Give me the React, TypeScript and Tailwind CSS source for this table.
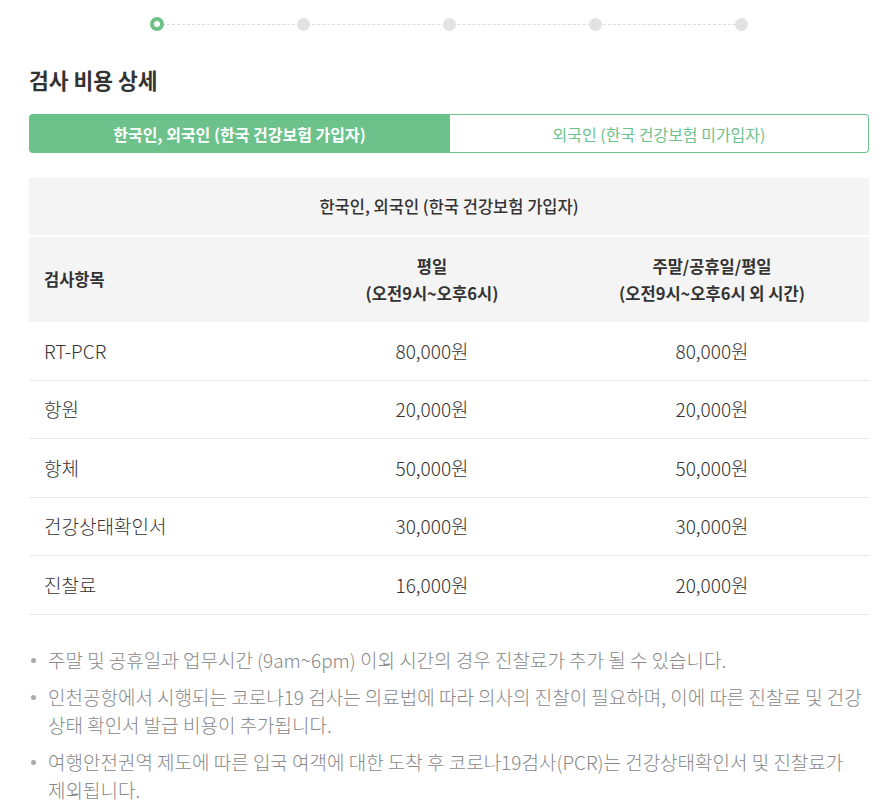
import React from "react";

const rows = [
  ["RT-PCR", "80,000원", "80,000원"],
  ["항원", "20,000원", "20,000원"],
  ["항체", "50,000원", "50,000원"],
  ["건강상태확인서", "30,000원", "30,000원"],
  ["진찰료", "16,000원", "20,000원"],
];

export default function App() {
  return (
    <div
      className="w-[881px] min-h-[811px] bg-white"
      style={{ fontFamily: '"Noto Sans CJK KR", "Noto Sans", sans-serif' }}
    >
      <div className="ml-[29px] w-[840px]">
        {/* stepper */}
        <div className="pt-[17px]">
          <div className="relative mx-auto flex h-[14px] w-[598px] items-center justify-between">
            <div className="absolute left-[7px] right-[7px] top-[7px] border-t border-dashed border-[#dcdcdc]" />
            <div className="relative h-[14px] w-[14px] rounded-full border-[4.5px] border-[#6cc28a] bg-white" />
            <div className="relative h-[13px] w-[13px] rounded-full bg-[#e2e2e2]" />
            <div className="relative h-[13px] w-[13px] rounded-full bg-[#e2e2e2]" />
            <div className="relative h-[13px] w-[13px] rounded-full bg-[#e2e2e2]" />
            <div className="relative h-[13px] w-[13px] rounded-full bg-[#e2e2e2]" />
          </div>
        </div>

        <h2 className="mt-[35px] text-[21.5px] font-bold leading-[28px] text-[#333]">
          검사 비용 상세
        </h2>

        {/* tabs */}
        <div className="mt-[20px] grid h-[39px] grid-cols-[421px_1fr]">
          <div className="flex items-center justify-center rounded-l-[4px] bg-[#6cc28a] text-[16px] font-bold text-white">
            한국인, 외국인 (한국 건강보험 가입자)
          </div>
          <div className="flex items-center justify-center rounded-r-[4px] border border-l-0 border-[#6cc28a] text-[16px] text-[#6cc28a]">
            외국인 (한국 건강보험 미가입자)
          </div>
        </div>

        {/* table */}
        <div className="mt-[25px]">
          <div className="flex h-[57px] items-center justify-center bg-[#f4f4f4] text-[16.5px] font-medium text-[#333]">
            한국인, 외국인 (한국 건강보험 가입자)
          </div>
          <div className="mt-[2px] grid h-[85px] grid-cols-[280px_246px_1fr] items-center bg-[#f4f4f4] text-[16.5px] font-bold leading-[27px] text-[#333]">
            <div className="pl-[15px]">검사항목</div>
            <div className="text-center">
              평일
              <br />
              (오전9시~오후6시)
            </div>
            <div className="text-center">
              주말/공휴일/평일
              <br />
              (오전9시~오후6시 외 시간)
            </div>
          </div>
          {rows.map((r, i) => (
            <div
              key={i}
              className="grid h-[58.6px] grid-cols-[280px_246px_1fr] items-center border-b border-[#e8e8e8] text-[19px] font-light text-[#333]"
            >
              <div className="pl-[15px]">{r[0]}</div>
              <div className="text-center">{r[1]}</div>
              <div className="text-center">{r[2]}</div>
            </div>
          ))}
        </div>

        {/* notes */}
        <ul className="mt-[31px] break-keep text-[19px] font-light leading-[28px] text-[#888]">
          {[
            "주말 및 공휴일과 업무시간 (9am~6pm) 이외 시간의 경우 진찰료가 추가 될 수 있습니다.",
            "인천공항에서 시행되는 코로나19 검사는 의료법에 따라 의사의 진찰이 필요하며, 이에 따른 진찰료 및 건강 상태 확인서 발급 비용이 추가됩니다.",
            "여행안전권역 제도에 따른 입국 여객에 대한 도착 후 코로나19검사(PCR)는 건강상태확인서 및 진찰료가 제외됩니다.",
          ].map((t, i) => (
            <li key={i} className={`relative pl-[19px] ${i > 0 ? "mt-[9px]" : ""}`}>
              <span className="absolute left-[2px] top-[12px] h-[5px] w-[5px] rounded-full bg-[#aaa]" />
              {t}
            </li>
          ))}
        </ul>
      </div>
    </div>
  );
}
